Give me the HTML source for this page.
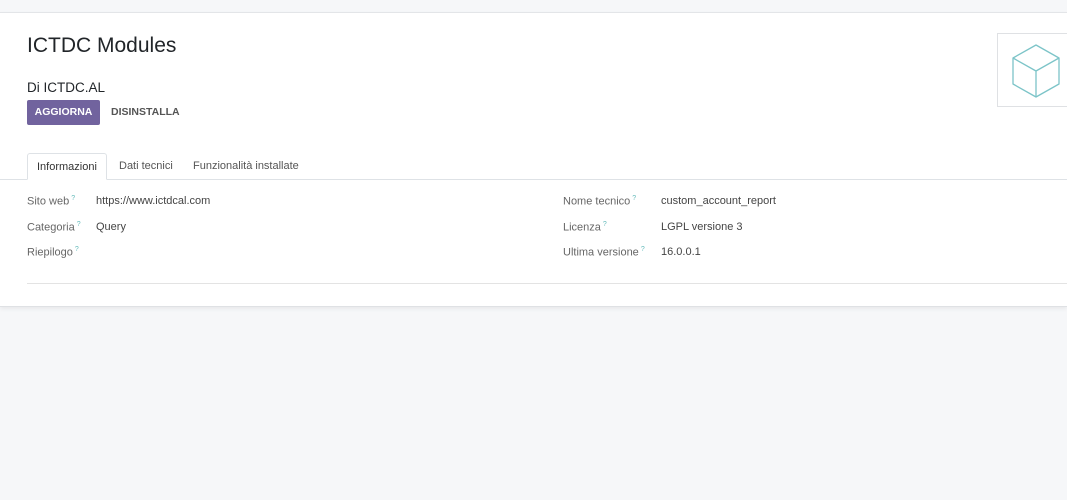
<!DOCTYPE html>
<html><head><meta charset="utf-8"><style>
*{box-sizing:border-box;margin:0;padding:0}
body{width:1067px;height:500px;background:#f6f7f9;font-family:"Liberation Sans",sans-serif;position:relative;overflow:hidden;color:#4c4c4c}
.card{position:absolute;left:0;top:12px;width:1067px;height:295px;background:#fff;border-top:1px solid #e3e5e8;border-bottom:1px solid #dfe1e4;box-shadow:0 2px 4px rgba(0,0,0,.06)}
.abs{position:absolute;white-space:nowrap}
h1{position:absolute;left:27px;top:21px;font-size:21px;font-weight:normal;color:#212529}
.by{left:27px;top:67px;font-size:13.5px;color:#212529}
.btn{left:27px;top:87px;width:73px;height:25px;background:#71639e;color:#fff;font-size:10.5px;font-weight:bold;line-height:25px;text-align:center;border-radius:2px}
.btn2{left:111px;top:87px;line-height:25px;font-size:10.5px;font-weight:bold;color:#555}
.tabline{position:absolute;left:0;right:0;top:166px;border-top:1px solid #dee2e6}
.tab{top:140px;height:27px;line-height:26px;font-size:11px;color:#555;padding:0 9px}
.tab.a{border:1px solid #dee2e6;border-bottom:1px solid #fff;background:#fff;border-radius:3px 3px 0 0;color:#333}
.l{font-size:11px;color:#666}
.l sup{font-size:7px;color:#6bb;margin-left:2px}
.v{font-size:11px;color:#444}
.hr{position:absolute;left:27px;width:1040px;top:270px;border-top:1px solid #e3e3e3}
.img{position:absolute;left:997px;top:20px;width:75px;height:74px;border:1px solid #dfe1e4;background:#fff}
</style></head><body>
<div class="card">
<h1>ICTDC Modules</h1>
<div class="abs by">Di ICTDC.AL</div>
<div class="abs btn">AGGIORNA</div>
<div class="abs btn2">DISINSTALLA</div>
<div class="tabline"></div>
<div class="abs tab a" style="left:27px">Informazioni</div>
<div class="abs tab" style="left:110px">Dati tecnici</div>
<div class="abs tab" style="left:184px">Funzionalità installate</div>
<div class="abs l" style="left:27px;top:182px">Sito web<sup>?</sup></div>
<div class="abs v" style="left:96px;top:182px">https://www.ictdcal.com</div>
<div class="abs l" style="left:27px;top:208px">Categoria<sup>?</sup></div>
<div class="abs v" style="left:96px;top:208px">Query</div>
<div class="abs l" style="left:27px;top:233px">Riepilogo<sup>?</sup></div>
<div class="abs l" style="left:563px;top:182px">Nome tecnico<sup>?</sup></div>
<div class="abs v" style="left:661px;top:182px">custom_account_report</div>
<div class="abs l" style="left:563px;top:208px">Licenza<sup>?</sup></div>
<div class="abs v" style="left:661px;top:208px">LGPL versione 3</div>
<div class="abs l" style="left:563px;top:233px">Ultima versione<sup>?</sup></div>
<div class="abs v" style="left:661px;top:233px">16.0.0.1</div>
<div class="hr"></div>
<div class="img"><svg width="75" height="74" viewBox="0 0 75 74"><g fill="none" stroke="#7cc4c8" stroke-width="1.3" stroke-linejoin="round"><path d="M15 24 L38 11 L61 24 L61 50 L38 63 L15 50 Z"/><path d="M15 24 L38 37 L61 24 M38 37 L38 63"/></g></svg></div>
</div>
</body></html>
